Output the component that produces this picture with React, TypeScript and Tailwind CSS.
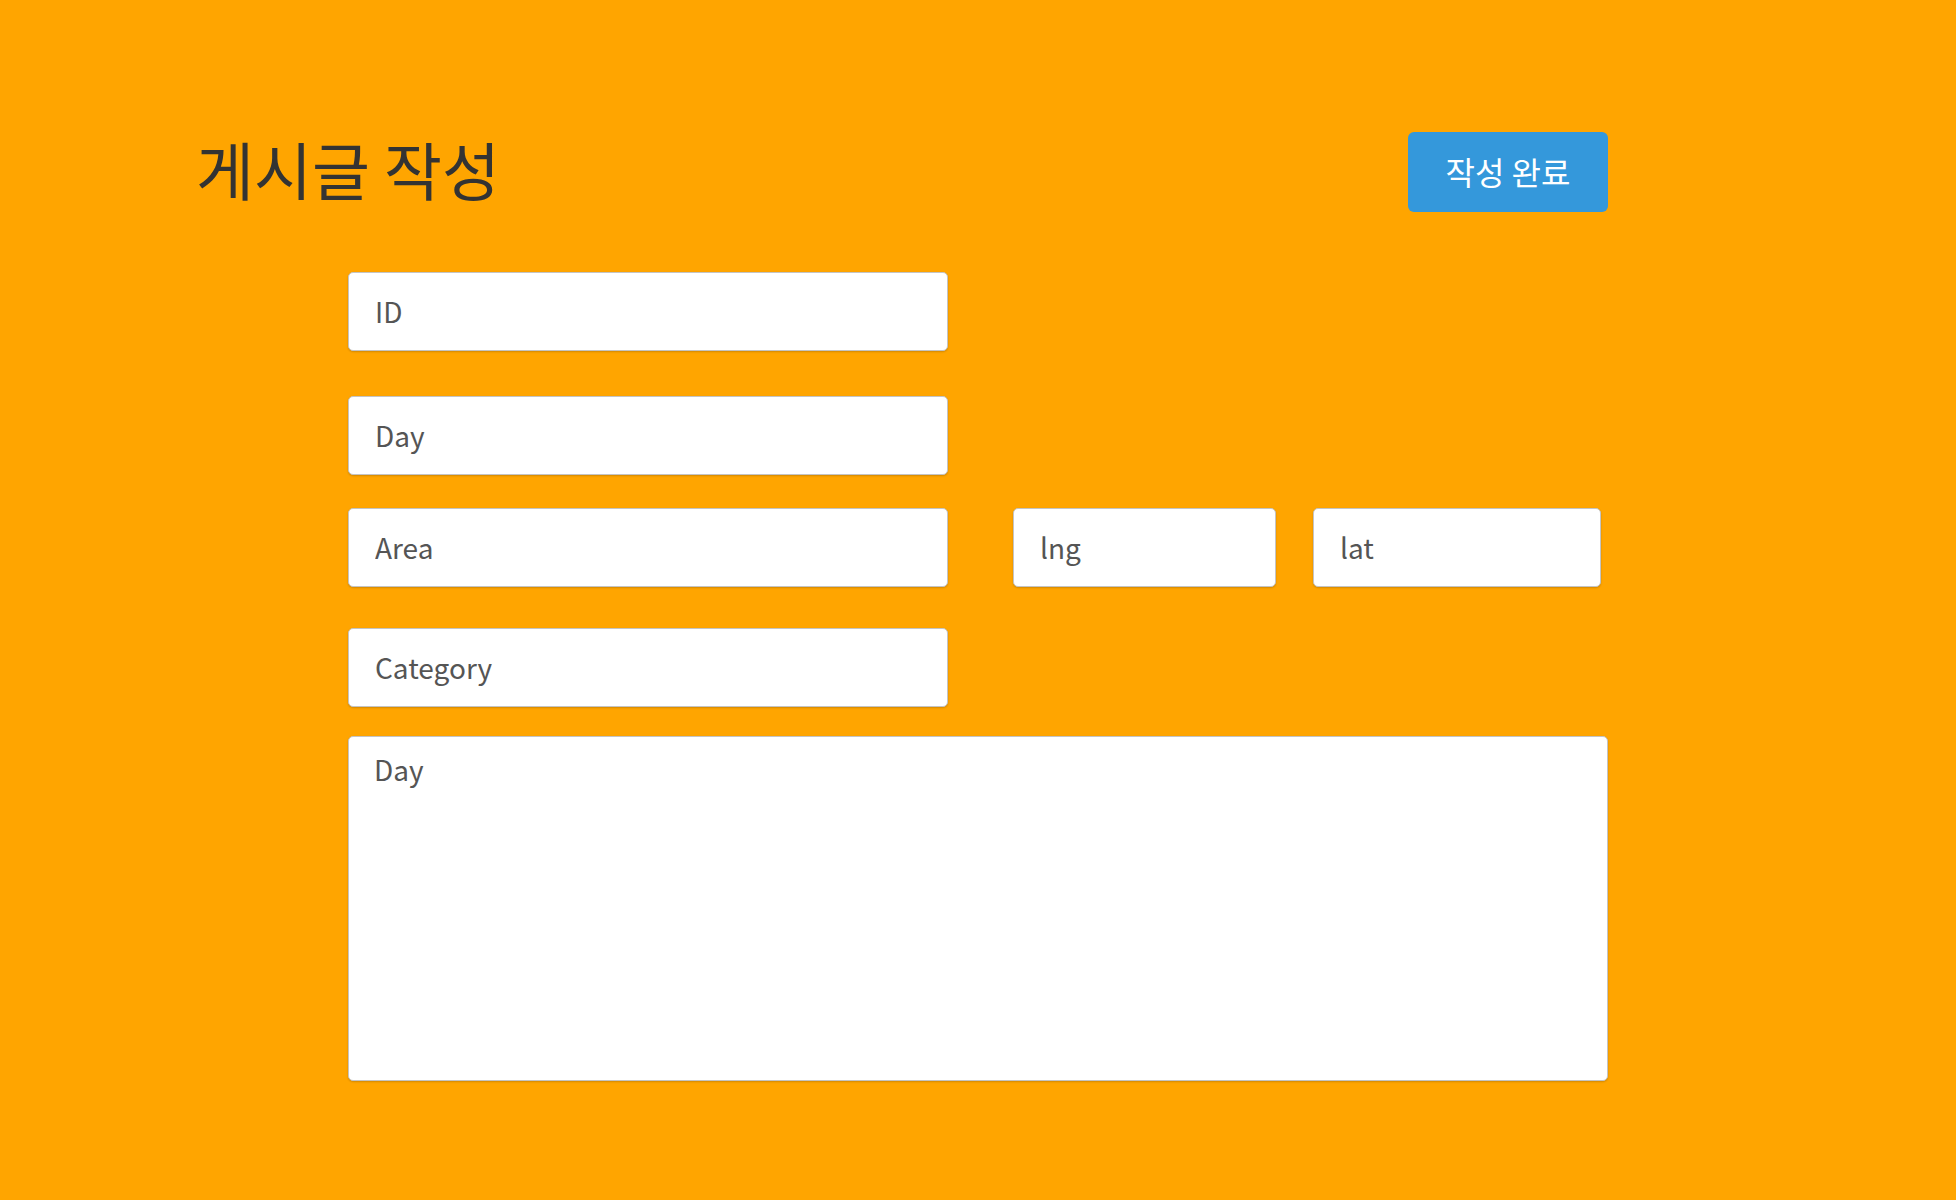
import React from "react";

const font = { fontFamily: '"Noto Sans CJK KR", "Noto Sans", sans-serif' };

const inputCls =
  "h-[79px] rounded-[5px] border border-[#c4c4c4] bg-white px-[26px] pb-[2px] text-[28px] text-[#444] placeholder:text-[#555] shadow-[0_1px_2px_rgba(0,0,0,0.18)] outline-none";

export default function App() {
  return (
    <div className="min-h-screen w-full bg-[#ffa500]" style={font}>
      <div className="pl-[196px] pt-[132px] pb-[120px]">
        <div className="flex w-[1412px] items-center justify-between">
          <h1 className="-mt-[10px] text-[63px] leading-none text-[#333] font-normal">게시글 작성</h1>
          <button className="h-[80px] w-[200px] rounded-[6px] bg-[#3498db] pb-[3px] text-[32px] text-white">
            작성 완료
          </button>
        </div>
        <div className="ml-[152px] mt-[60px] flex flex-col">
          <input className={`${inputCls} w-[600px]`} placeholder="ID" />
          <input className={`${inputCls} mt-[45px] w-[600px]`} placeholder="Day" />
          <div className="mt-[33px] flex items-center">
            <input className={`${inputCls} w-[600px]`} placeholder="Area" />
            <input className={`${inputCls} ml-[65px] w-[263px]`} placeholder="lng" />
            <input className={`${inputCls} ml-[37px] w-[288px]`} placeholder="lat" />
          </div>
          <input className={`${inputCls} mt-[41px] w-[600px]`} placeholder="Category" />
          <textarea
            className="mt-[29px] h-[345px] w-[1260px] resize-none rounded-[5px] border border-[#c4c4c4] bg-white px-[25px] pt-[11px] text-[28px] text-[#444] placeholder:text-[#555] shadow-[0_1px_2px_rgba(0,0,0,0.18)] outline-none"
            placeholder="Day"
          />
        </div>
      </div>
    </div>
  );
}
